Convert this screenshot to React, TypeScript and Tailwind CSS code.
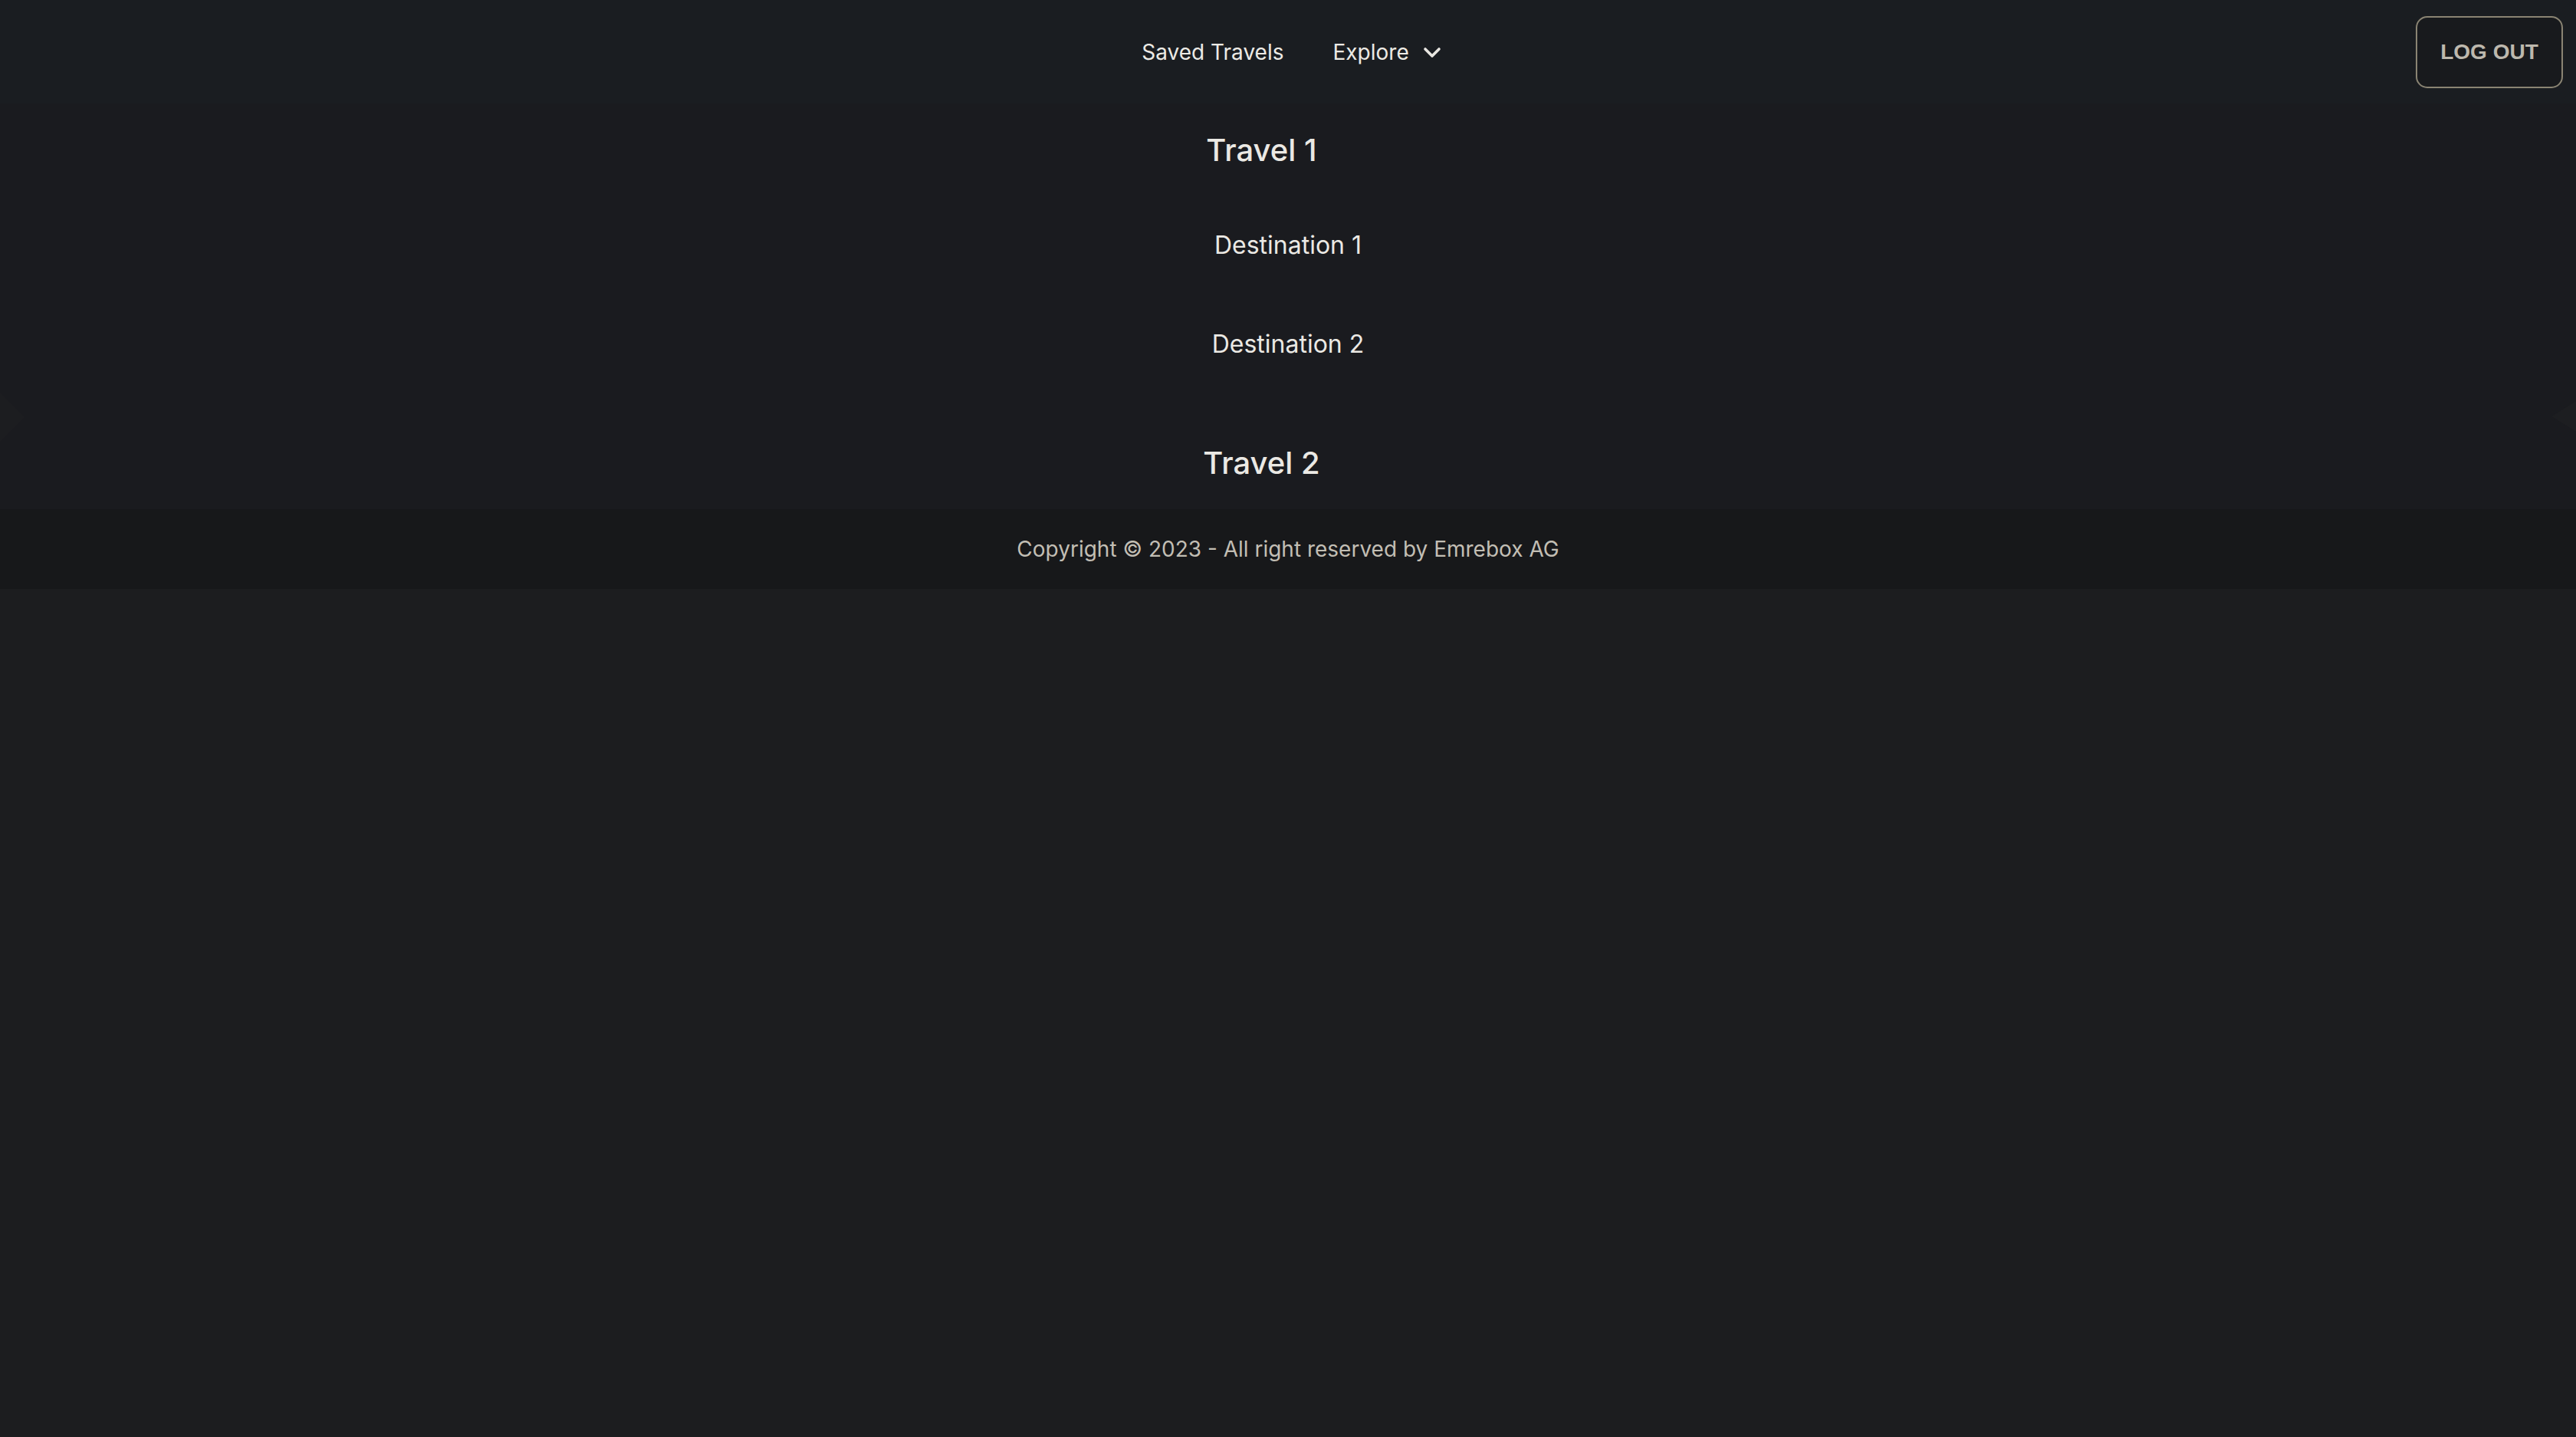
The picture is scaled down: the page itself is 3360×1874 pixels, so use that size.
import React from "react";

function Chevron() {
  return (
    <svg width="24" height="16" viewBox="0 0 24 16" fill="none" className="ml-[18px] mt-[2px]">
      <path d="M3 3 L12 12 L21 3" stroke="#e8e6e1" strokeWidth="3.6" strokeLinecap="round" strokeLinejoin="round" />
    </svg>
  );
}

export default function App() {
  return (
    <div
      className="relative min-h-screen w-full bg-[#1c1d1f] text-[#ebe9e4]"
      style={{ fontFamily: "Inter, 'Noto Sans', sans-serif" }}
    >
      {/* Header */}
      <header className="flex h-[135px] items-center bg-[#1a1d21]">
        <div className="flex-1" />
        <nav className="flex items-center gap-[64px] pl-[26px] text-[28px] leading-[40px] text-[#eceae5]">
          <span>Saved Travels</span>
          <span className="flex items-center">
            Explore
            <Chevron />
          </span>
        </nav>
        <div className="flex flex-1 justify-end pr-[17px]">
          <button
            className="flex h-[94px] w-[192px] items-center justify-center rounded-[15px] border-2 border-[#8a8473] bg-[#181a1d] text-[28px] font-bold text-[#bdb8ad]"
            style={{ fontFamily: "'Liberation Sans', Arial, sans-serif" }}
          >
            LOG OUT
          </button>
        </div>
      </header>

      {/* Travels */}
      <main className="bg-[#1a1b1f]">
        <section>
          <div className="pl-[34px] pr-[103px] pt-[33px] pb-[34px] text-center text-[40px] font-medium leading-[56px]">
            Travel 1
          </div>
          <div className="flex flex-col items-center gap-[85px] pt-[40px] pb-[71px] text-[32px] leading-[44px]">
            <span>Destination 1</span>
            <span>Destination 2</span>
          </div>
        </section>
        <section>
          <div className="pl-[34px] pr-[103px] pt-[34px] pb-[32px] text-center text-[40px] font-medium leading-[56px]">
            Travel 2
          </div>
        </section>
      </main>

      {/* Footer */}
      <footer className="flex h-[104px] items-center justify-center bg-[#17181a] text-[28px] text-[#c2beb4]">
        Copyright © 2023 - All right reserved by Emrebox AG
      </footer>

      {/* faint carousel controls */}
      <div className="pointer-events-none absolute left-0 top-[512px] h-[64px] w-[32px] bg-[#1c1d20] [clip-path:polygon(0_0,100%_50%,0_100%)]" />
      <div className="pointer-events-none absolute right-0 top-[523px] h-[40px] w-[32px] bg-[#1d1e21] [clip-path:polygon(100%_0,0_50%,100%_100%)]" />
    </div>
  );
}
